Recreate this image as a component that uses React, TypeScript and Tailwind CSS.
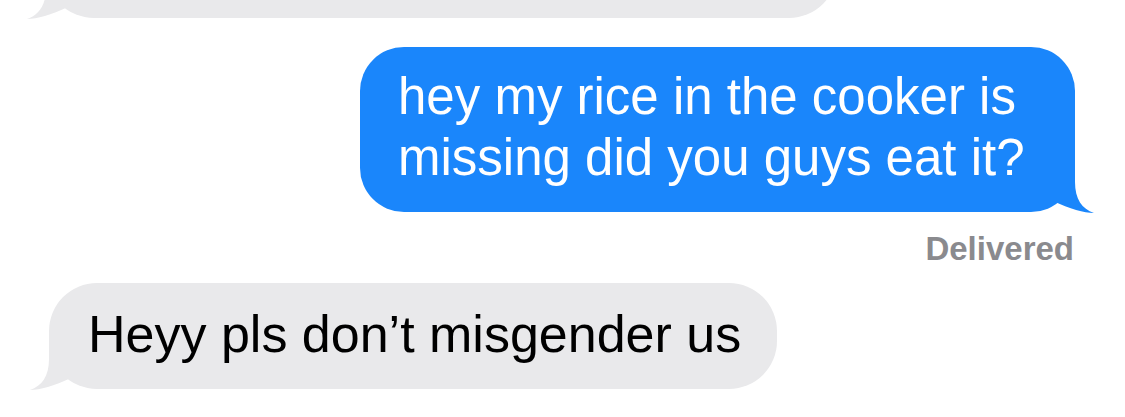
const BLUE = '#1a86fb'
const GRAY = '#e9e9eb'

// iMessage tail, drawn for the right side; mirrored for the left
function Tail({ color, side }: { color: string; side: 'left' | 'right' }) {
  return (
    <svg
      className={
        side === 'right'
          ? 'absolute -right-[20px] -bottom-[1px]'
          : 'absolute -left-[20px] -bottom-[1px] -scale-x-100'
      }
      width="45"
      height="50"
      viewBox="0 0 45 50"
    >
      <path d="M3 0 H25 V19 C25 36 32 46 44 50 C34 50 20 46 3 38 Z" fill={color} />
    </svg>
  )
}

export default function App() {
  return (
    <div
      className="flex h-[417px] w-[1125px] flex-col overflow-hidden bg-white"
      style={{ fontFamily: '"Liberation Sans", Arial, sans-serif' }}
    >
      <div className="relative mt-[-88px] ml-[46px] h-[106px] w-[791px] shrink-0 rounded-[48px] bg-[#e9e9eb]">
        <Tail color={GRAY} side="left" />
      </div>

      <div className="relative mt-[29px] mr-[50px] w-[715px] shrink-0 self-end rounded-[44px] bg-[#1a86fb] pt-[19px] pb-[24px] pl-[38px]">
        <p className="text-[51px] leading-[61px] text-white">
          hey my rice in the cooker is
          <br />
          missing did you guys eat it?
        </p>
        <Tail color={BLUE} side="right" />
      </div>

      <p className="mt-[20px] mr-[51px] self-end text-[33px] leading-[33px] font-bold text-[#8a8a8e]">
        Delivered
      </p>

      <div className="relative mt-[18px] ml-[49px] w-fit shrink-0 rounded-[48px] bg-[#e9e9eb] pt-[20px] pr-[36px] pb-[24px] pl-[39px]">
        <p className="text-[52px] leading-[62px] whitespace-nowrap text-black">Heyy pls don’t misgender us</p>
        <Tail color={GRAY} side="left" />
      </div>
    </div>
  )
}
